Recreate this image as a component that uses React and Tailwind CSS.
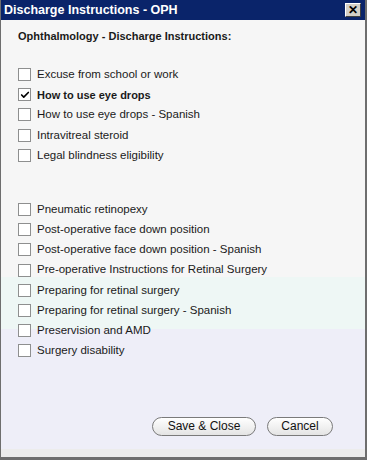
import { Check } from "lucide-react";

const GROUP_A = [
  { label: "Excuse from school or work" },
  { label: "How to use eye drops", checked: true },
  { label: "How to use eye drops - Spanish" },
  { label: "Intravitreal steroid" },
  { label: "Legal blindness eligibility" },
];

const GROUP_B = [
  { label: "Pneumatic retinopexy" },
  { label: "Post-operative face down position" },
  { label: "Post-operative face down position - Spanish" },
  { label: "Pre-operative Instructions for Retinal Surgery" },
  { label: "Preparing for retinal surgery" },
  { label: "Preparing for retinal surgery - Spanish" },
  { label: "Preservision and AMD" },
  { label: "Surgery disability" },
];

function CheckRow({ label, checked }) {
  return (
    <label className="flex h-[20.2px] items-center gap-[6px]">
      <span className="flex h-[13px] w-[13px] shrink-0 items-center justify-center border border-[#8e8f8f] bg-white">
        {checked && <Check className="h-[10px] w-[10px] text-black" strokeWidth={4} />}
      </span>
      <span className={checked ? "text-[11px] font-bold" : ""}>{label}</span>
    </label>
  );
}

function PillButton({ children, className = "" }) {
  return (
    <button
      type="button"
      className={`h-[19px] rounded-full border border-[#7a7a7a] bg-gradient-to-b from-white to-[#e4e4e4] text-[12px] leading-none text-[#111] ${className}`}
    >
      {children}
    </button>
  );
}

export default function App() {
  return (
    <div className="h-[460px] w-[367px] overflow-hidden bg-[#f0f0f0] font-['Liberation_Sans',Tahoma,sans-serif] text-[11.5px] text-[#1a1a1a]">
      <div className="flex h-full flex-col border-b-[3px] border-l border-r-[2px] border-[#6e6e6e]">
        <div className="flex h-[20px] items-center justify-between bg-[#0a246a] pl-[3px] pr-[4px]">
          <span className="text-[12.5px] font-bold text-white">Discharge Instructions - OPH</span>
          <button
            type="button"
            className="flex h-[14px] w-[16px] items-center justify-center border border-t-white border-l-white border-b-[#404040] border-r-[#404040] bg-[#d4d0c8] text-[12px] font-bold leading-none text-black"
          >
            ✕
          </button>
        </div>
        <div className="flex flex-1 flex-col bg-[linear-gradient(to_bottom,#f6f6f6_0,#f6f6f6_257px,#eef7f5_257px,#eef7f5_309px,#eeeef8_309px)] px-[17px] pt-[8px]">
          <div className="text-[11px] font-bold">Ophthalmology - Discharge Instructions:</div>
          <div className="mt-[20px] flex flex-col">
            {GROUP_A.map((item) => (
              <CheckRow key={item.label} {...item} />
            ))}
          </div>
          <div className="mt-[34px] flex flex-col">
            {GROUP_B.map((item) => (
              <CheckRow key={item.label} {...item} />
            ))}
          </div>
          <div className="mt-[56px] flex justify-end gap-[11px] pr-[15px]">
            <PillButton className="w-[104px]">Save &amp; Close</PillButton>
            <PillButton className="w-[66px]">Cancel</PillButton>
          </div>
        </div>
        <div className="h-[8px] bg-[#ececec]" />
      </div>
    </div>
  );
}
